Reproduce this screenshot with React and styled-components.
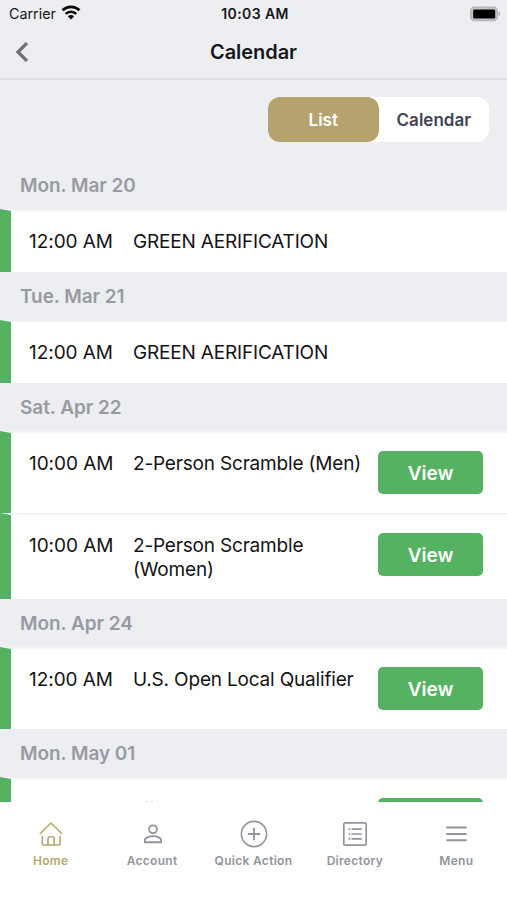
import React, { useState } from 'react'
import styled, { createGlobalStyle } from 'styled-components'

const days = [
    { date: 'Mon. Mar 20', events: [{ time: '12:00 AM', title: 'GREEN AERIFICATION', height: 63, spacing: -0.18 }] },
    { date: 'Tue. Mar 21', events: [{ time: '12:00 AM', title: 'GREEN AERIFICATION', height: 63, spacing: -0.18 }] },
    {
        date: 'Sat. Apr 22',
        events: [
            { time: '10:00 AM', title: '2-Person Scramble (Men)', height: 82, view: true },
            { time: '10:00 AM', title: '2-Person Scramble (Women)', height: 86, view: true },
        ],
    },
    { date: 'Mon. Apr 24', events: [{ time: '12:00 AM', title: 'U.S. Open Local Qualifier', height: 82, view: true }] },
    { date: 'Mon. May 01', events: [{ height: 82, view: true, cut: true }] },
]

const tabs = [
    { label: 'Home', icon: HomeIcon },
    { label: 'Account', icon: AccountIcon },
    { label: 'Quick Action', icon: PlusIcon },
    { label: 'Directory', icon: DirectoryIcon },
    { label: 'Menu', icon: MenuIcon },
]

export default function App() {

    const [mode, setMode] = useState('List');
    const [tab, setTab] = useState('Home');

    return (
        <Screen>
            <GlobalStyle />
            <StatusBar>
                <Carrier>Carrier <WifiIcon /></Carrier>
                <Clock>10:03 AM</Clock>
                <BatteryIcon />
            </StatusBar>
            <NavBar>
                <BackButton aria-label="Back">
                    <svg width="15" height="22" viewBox="0 0 15 22" fill="none">
                        <path d="M13 2 4 11l9 9" stroke="#737376" strokeWidth="3.300" />
                    </svg>
                </BackButton>
                <h1>Calendar</h1>
            </NavBar>
            <Content>
                <SwitchRow>
                    <Switch>
                        {['List', 'Calendar'].map(name => (
                            <Option key={name} $active={mode === name} onClick={() => setMode(name)}>{name}</Option>
                        ))}
                    </Switch>
                </SwitchRow>
                {days.map(day => (
                    <section key={day.date}>
                        <DayHeader>{day.date}</DayHeader>
                        {day.events.map((event, i) => (
                            <EventRow key={i} $height={event.height} $cut={event.cut}>
                                <Time>{event.time}</Time>
                                <Title $spacing={event.spacing}>{event.cut ? <CutMarks /> : event.title}</Title>
                                {event.view && <ViewButton>{event.cut ? '' : 'View'}</ViewButton>}
                            </EventRow>
                        ))}
                    </section>
                ))}
            </Content>
            <TabBar>
                {tabs.map(({ label, icon: Icon }) => (
                    <Tab key={label} $active={tab === label} onClick={() => setTab(label)}>
                        <Icon />
                        <span>{label}</span>
                    </Tab>
                ))}
            </TabBar>
        </Screen>
    )
}

function WifiIcon() {
    return (
        <svg width="20" height="15" viewBox="0 0 20 15" fill="none" stroke="#0b0b0c" strokeWidth="2.700">
            <path d="M1.500 5.300a12.200 12.200 0 0 1 17 0" />
            <path d="M4.700 8.900a7.600 7.600 0 0 1 10.600 0" />
            <path d="M10 14.500 6.900 11.400a4.400 4.400 0 0 1 6.200 0z" fill="#0b0b0c" stroke="none" />
        </svg>
    )
}

function BatteryIcon() {
    return (
        <svg width="31" height="16" viewBox="0 0 31 16">
            <rect x="0.800" y="1.200" width="26.400" height="13.300" rx="3.500" fill="#c4c4c6" stroke="#b4b4b7" strokeWidth="1.300" />
            <rect x="3.200" y="3.500" width="22" height="9" rx="1.300" fill="#000" />
            <path d="M28.600 5.500c1.800.6 1.800 3.900 0 4.500z" fill="#a2a2a5" />
        </svg>
    )
}

// Tops of the letters left showing above the tab bar
function CutMarks() {
    return (
        <svg width="30" height="3" viewBox="0 0 30 3" fill="#dedee1">
            <rect x="13" y="0" width="2" height="1" />
            <rect x="18" y="0" width="2" height="1" />
            <rect x="23" y="0" width="2" height="1" opacity="0.400" />
        </svg>
    )
}

function HomeIcon() {
    return (
        <svg width="28" height="28" viewBox="0 0 28 28" fill="none" stroke="currentColor" strokeWidth="1.600" strokeLinecap="round" strokeLinejoin="round">
            <path d="M3.300 13.500 14 3l10.700 10.500" />
            <path d="M5.300 16.200v7.600q0 1.200 1.200 1.200h15.400q1.200 0 1.200-1.200v-7.600" />
            <path d="M11 25v-6q0-2.200 2-2.200h2.200q2 0 2 2.200v6" />
        </svg>
    )
}

function AccountIcon() {
    return (
        <svg width="28" height="28" viewBox="0 0 28 28" fill="none" stroke="currentColor" strokeWidth="1.900">
            <circle cx="14" cy="9.300" r="3.900" />
            <path d="M5.900 22.300v-2.200c0-2.700 5.200-4 8.100-4s8.100 1.300 8.100 4v2.200z" />
        </svg>
    )
}

function PlusIcon() {
    return (
        <svg width="28" height="28" viewBox="0 0 28 28" fill="none" stroke="currentColor" strokeWidth="1.600">
            <circle cx="14" cy="14" r="12.600" />
            <path d="M14 7.800v12.400M7.800 14h12.400" strokeWidth="1.800" />
        </svg>
    )
}

function DirectoryIcon() {
    return (
        <svg width="28" height="28" viewBox="0 0 28 28" fill="none" stroke="currentColor" strokeWidth="1.700">
            <rect x="2.800" y="2.800" width="22.400" height="22.400" rx="1.500" />
            <path d="M11.200 9.100h9M11.200 14h9M11.200 18.900h9" strokeLinecap="round" />
            <path d="M7.500 9.100h1.700M7.500 14h1.700M7.500 18.900h1.700" />
        </svg>
    )
}

function MenuIcon() {
    return (
        <svg width="28" height="28" viewBox="0 0 28 28" stroke="currentColor" strokeWidth="2">
            <path d="M3.300 7.500h20.400M3.300 14h20.400M3.300 20.300h20.400" />
        </svg>
    )
}

const GlobalStyle = createGlobalStyle`

* {
    box-sizing: border-box;
}

body {
    margin: 0;
    background: #edeef2;
    font-family: Inter, 'Liberation Sans', sans-serif;
}

button {
    border: 0;
    padding: 0;
    font-family: inherit;
    cursor: pointer;
}

`

const Screen = styled.div`

display: flex;
flex-direction: column;
height: 900px;
overflow: hidden;
background: #edeef2;

`

const StatusBar = styled.div`

display: grid;
grid-template-columns: 1fr auto 1fr;
align-items: center;
height: 28px;
flex-shrink: 0;
padding: 0 6px 0 9px;
color: #17171a;

> svg {
    justify-self: end;
    margin-bottom: 1px;
}

`

const Carrier = styled.div`

display: flex;
align-items: center;
gap: 5px;
height: 26px;
margin-bottom: 2px;
font-size: 14.3px;

svg {
    margin-bottom: 1px;
}

`

const Clock = styled.div`

margin-bottom: 2px;
font-size: 14px;
font-weight: 600;
letter-spacing: 0.4px;

`

const NavBar = styled.header`

display: grid;
grid-template-columns: 60px 1fr 60px;
align-items: center;
height: 52px;
flex-shrink: 0;
padding-bottom: 3px;
border-bottom: 2px solid #dedfe3;

h1 {
    margin: 0;
    text-align: center;
    font-size: 20px;
    font-weight: 600;
    letter-spacing: -0.05px;
    color: #17171a;
}

`

const BackButton = styled.button`

display: flex;
padding-left: 14px;
background: none;

`

const Content = styled.main`

height: 722px;
flex-shrink: 0;
overflow: hidden;

`

const SwitchRow = styled.div`

display: flex;
justify-content: flex-end;
padding: 17px 18px 19px 0;

`

const Switch = styled.div`

display: flex;
width: 221px;
height: 45px;
border-radius: 12px;
background: #fff;

`

const Option = styled.button`

flex: 1;
border-radius: 12px;
background: ${props => props.$active ? '#b5a36e' : 'transparent'};
color: ${props => props.$active ? '#fff' : '#41444f'};
font-size: 17px;
font-weight: 600;

`

const DayHeader = styled.h2`

height: 48px;
margin: 0;
padding: 1px 0 0 20px;
font-size: 19px;
line-height: 48px;
font-weight: 600;
letter-spacing: -0.05px;
color: #989aa2;

`

const EventRow = styled.article`

display: flex;
align-items: flex-start;
height: ${props => props.$height}px;
padding: ${props => props.$cut ? 19 : 18}px 24px 0 18px;
border-top: 2px solid #f3f3f6;
border-left: 11px solid #56b263;
background: #fff;
color: #131315;

`

const Time = styled.div`

width: 104px;
flex-shrink: 0;
padding-top: 1px;
font-size: 19px;
line-height: 23px;
letter-spacing: -0.05px;

`

const Title = styled.div`

flex: 1;
padding-top: 1px;
font-size: 19px;
line-height: 23.500px;
letter-spacing: ${props => props.$spacing || -0.18}px;

svg {
    display: block;
    margin-top: 2px;
}

`

const ViewButton = styled.button`

width: 105px;
height: 43px;
flex-shrink: 0;
padding-top: 1px;
border-radius: 5px;
background: #56b263;
color: #fff;
font-size: 19px;
font-weight: 600;

`

const TabBar = styled.nav`

display: grid;
grid-template-columns: repeat(5, 1fr);
height: 98px;
flex-shrink: 0;
background: #fff;

`

const Tab = styled.button`

display: flex;
flex-direction: column;
align-items: center;
padding-top: 18px;
background: none;
color: ${props => props.$active ? '#b8a76f' : '#92949e'};

svg {
    margin-left: 1px;
}

span {
    margin-top: 5px;
    font-size: 12px;
    line-height: 15px;
    font-weight: 600;
    letter-spacing: 0.3px;
    white-space: nowrap;
}

`
